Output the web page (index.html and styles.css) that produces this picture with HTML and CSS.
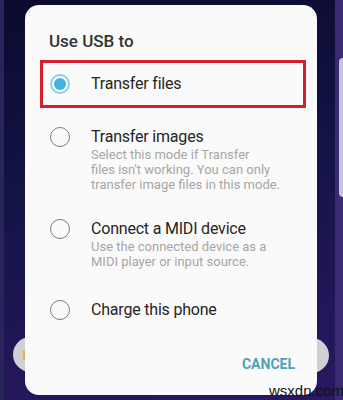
FILE: index.html
```html
<!DOCTYPE html>
<html>
<head>
    <meta charset="UTF-8">
    <meta name="viewport" content="width=device-width, initial-scale=1.0">
    <title>Use USB to</title>
    <link rel="stylesheet" href="styles.css">
</head>
<body>

<div class="phone">
    <div class="side-btn side-left"><span class="dot"></span></div>
    <div class="side-btn side-right"></div>
    <div class="volume-bar"></div>

    <div class="dialog">
        <h1 class="dialog-title">Use USB to</h1>

        <div class="option option-selected">
            <span class="radio checked"></span>
            <div class="option-text">
                <div class="option-label">Transfer files</div>
            </div>
        </div>

        <div class="option first-plain">
            <span class="radio"></span>
            <div class="option-text">
                <div class="option-label">Transfer images</div>
                <div class="option-desc">Select this mode if Transfer<br>files isn't working. You can only<br>transfer image files in this mode.</div>
            </div>
        </div>

        <div class="option">
            <span class="radio"></span>
            <div class="option-text">
                <div class="option-label">Connect a MIDI device</div>
                <div class="option-desc">Use the connected device as a<br>MIDI player or input source.</div>
            </div>
        </div>

        <div class="option last-plain">
            <span class="radio"></span>
            <div class="option-text">
                <div class="option-label">Charge this phone</div>
            </div>
        </div>

        <div class="dialog-actions">
            <button class="btn-cancel">CANCEL</button>
        </div>
    </div>

    <div class="watermark">wsxdn.com</div>
</div>

</body>
</html>
```

FILE: styles.css
```css
        body {
            margin: 0;
            font-family: Roboto, "Noto Sans", sans-serif;
            color: #262626;
        }

        .phone {
            position: relative;
            width: 343px;
            height: 400px;
            overflow: hidden;
            background: linear-gradient(170deg, #0b0a2e 0%, #141447 45%, #2a1862 100%);
            box-shadow: inset 4px 0 0 #27255a, inset -8px 0 0 #3b2a72;
            padding-top: 5px;
            box-sizing: border-box;
        }

        .side-btn {
            position: absolute;
            top: 337px;
            width: 35px;
            height: 35px;
            border-radius: 50%;
            background-color: #cfcfd4;
        }

        .side-left {
            left: 13px;
        }

        .side-left .dot {
            position: absolute;
            left: 10px;
            top: 13px;
            width: 4px;
            height: 10px;
            border-radius: 2px;
            background-color: #d9b54a;
        }

        .side-right {
            left: 294px;
            top: 338px;
        }

        .volume-bar {
            position: absolute;
            left: 339px;
            top: 58px;
            width: 12px;
            height: 139px;
            border-radius: 4px;
            background-color: #c9c6d3;
        }

        .dialog {
            position: relative;
            margin-left: 25px;
            width: 292px;
            height: 390px;
            box-sizing: border-box;
            background-color: #fafafa;
            border-radius: 14px;
            padding: 26px 11px 0 15px;
        }

        .dialog-title {
            margin: 0 0 9px 9px;
            font-size: 17px;
            line-height: 20px;
            font-weight: 500;
            color: #333;
        }

        .option {
            display: flex;
            align-items: flex-start;
            margin-top: 27px;
            padding-left: 10px;
        }

        .option-selected {
            margin-top: 0;
            height: 48px;
            box-sizing: border-box;
            border: 3px solid #d3202f;
            align-items: center;
            padding-left: 7px;
        }

        .first-plain {
            margin-top: 19px;
        }

        .last-plain {
            margin-top: 31px;
        }

        .radio {
            flex: none;
            width: 20px;
            height: 20px;
            box-sizing: border-box;
            border: 1.5px solid #7a7a7a;
            border-radius: 50%;
            position: relative;
        }

        .radio.checked {
            border: 2px solid #8fd0e8;
        }

        .radio.checked::after {
            content: "";
            position: absolute;
            left: 2px;
            top: 2px;
            width: 12px;
            height: 12px;
            border-radius: 50%;
            background-color: #45b2e4;
        }

        .option-text {
            margin-left: 21px;
        }

        .option-label {
            font-size: 16px;
            line-height: 20px;
            letter-spacing: -0.2px;
            color: #262626;
        }

        .option-desc {
            font-size: 13px;
            line-height: 15px;
            color: #a6a6a6;
            white-space: nowrap;
        }

        .dialog-actions {
            display: flex;
            justify-content: flex-end;
            margin-top: 36px;
            padding-right: 11px;
        }

        .btn-cancel {
            border: none;
            background: none;
            padding: 0;
            font-family: Roboto, sans-serif;
            font-size: 14px;
            font-weight: 700;
            color: #4ea3b6;
            line-height: 16px;
        }

        .watermark {
            position: absolute;
            left: 269px;
            top: 382px;
            font-family: "Liberation Sans", Arial, sans-serif;
            font-size: 15px;
            color: #111;
        }
```
